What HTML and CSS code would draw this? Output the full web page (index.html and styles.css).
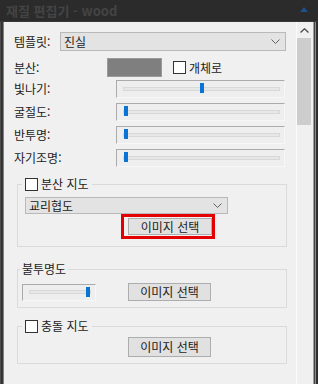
FILE: index.html
```html
<!DOCTYPE html>
<html lang="ko">
<head>
<meta charset="utf-8">
<title>재질 편집기 - wood</title>
<link rel="stylesheet" href="styles.css">
</head>
<body>
<div class="window">
  <div class="titlebar">
    <span class="title">재질 편집기 - wood</span>
    <svg class="tb-arrow" width="8" height="5" viewBox="0 0 8 5"><polygon points="0,5 4,0 8,5" fill="#1f4f8c"/></svg>
  </div>
  <div class="frame">
    <div class="edge-left"></div>
    <div class="content">
      <div class="row row-template">
        <span class="label lbl-template">템플릿:</span>
        <div class="combo combo-template">
          <span class="combo-text">진실</span>
          <svg class="chev" width="9" height="5" viewBox="0 0 9 5"><polyline points="0.5,0.5 4.5,4.5 8.5,0.5" fill="none" stroke="#606060" stroke-width="1"/></svg>
        </div>
      </div>
      <div class="row row-diffuse">
        <span class="label lbl-diffuse">분산:</span>
        <div class="swatch"></div>
        <label class="check check-inline"><span class="box"></span>개체로</label>
      </div>
      <div class="row row-slider">
        <span class="label lbl-slider">빛나기:</span>
        <div class="slider slider-wide"><div class="track"></div><div class="thumb" style="left: 83px"></div></div>
      </div>
      <div class="row row-slider">
        <span class="label lbl-slider">굴절도:</span>
        <div class="slider slider-wide"><div class="track"></div><div class="thumb" style="left: 7px"></div></div>
      </div>
      <div class="row row-slider">
        <span class="label lbl-slider">반투명:</span>
        <div class="slider slider-wide"><div class="track"></div><div class="thumb" style="left: 7px"></div></div>
      </div>
      <div class="row row-slider">
        <span class="label lbl-slider">자기조명:</span>
        <div class="slider slider-wide"><div class="track"></div><div class="thumb" style="left: 7px"></div></div>
      </div>

      <fieldset class="group group-diffuse">
        <legend class="legend-check"><span class="box"></span>분산 지도</legend>
        <div class="combo combo-map">
          <span class="combo-text">교리협도</span>
          <svg class="chev" width="9" height="5" viewBox="0 0 9 5"><polyline points="0.5,0.5 4.5,4.5 8.5,0.5" fill="none" stroke="#606060" stroke-width="1"/></svg>
        </div>
        <div class="highlight"><button class="btn">이미지 선택</button></div>
      </fieldset>

      <fieldset class="group group-opacity">
        <legend class="legend-text">불투명도</legend>
        <div class="group-row">
          <div class="slider slider-small"><div class="track"></div><div class="thumb" style="left: 63px"></div></div>
          <button class="btn btn-opacity">이미지 선택</button>
        </div>
      </fieldset>

      <fieldset class="group group-bump">
        <legend class="legend-check"><span class="box"></span>충돌 지도</legend>
        <button class="btn btn-bump">이미지 선택</button>
      </fieldset>
    </div>
    <div class="scrollbar">
      <div class="sb-up">
        <svg width="9" height="5" viewBox="0 0 9 5"><polyline points="0.5,4.5 4.5,0.8 8.5,4.5" fill="none" stroke="#505050" stroke-width="1.4"/></svg>
      </div>
      <div class="sb-thumb"></div>
    </div>
    <div class="edge-right"></div>
  </div>
</div>
</body>
</html>
```

FILE: styles.css
```css
* { box-sizing: border-box; }
html, body {
  margin: 0;
  padding: 0;
  width: 318px;
  height: 384px;
  overflow: hidden;
  background: #f0f0f0;
  font-family: "Noto Sans CJK KR", "Noto Sans", sans-serif;
  font-size: 12px;
  color: #1b1b1b;
}
.window {
  display: flex;
  flex-direction: column;
  width: 318px;
  height: 384px;
}
.titlebar {
  height: 22px;
  flex: none;
  background: #2b2b2b;
  display: flex;
  align-items: center;
  justify-content: space-between;
  padding: 0 10px 0 6px;
  border-bottom: 1px solid #383838;
}
.title {
  color: #444444;
  font-size: 13px;
  line-height: 16px;
  font-weight: bold;
}
.tb-arrow { display: block; margin-bottom: 2px; }
.frame {
  flex: 1;
  display: flex;
  min-height: 0;
}
.edge-left {
  width: 4px;
  flex: none;
  background: linear-gradient(to right, #5c5c5c, #2e2e2e 40%, #3c3c3c 70%, #b5b5b5);
}
.edge-right {
  width: 5px;
  flex: none;
  background: linear-gradient(to right, #a0a0a0 0, #a0a0a0 20%, #444 20%, #444 40%, #8a8a8a 40%, #8a8a8a 60%, #2e2e2e 60%, #2e2e2e 100%);
}
.content {
  width: 292px;
  flex: none;
  padding: 10px 0 0 10px;
  display: flex;
  flex-direction: column;
}
.row {
  display: flex;
  align-items: center;
  flex: none;
}
.label { flex: none; white-space: nowrap; line-height: 16px; }
.row-template { height: 19px; }
.lbl-template { width: 46px; }
.combo {
  display: flex;
  align-items: center;
  justify-content: space-between;
  background: #e3e3e3;
  border: 1px solid #b9b9b9;
  line-height: 14px;
}
.combo-template { width: 226px; height: 19px; padding: 0 5px 0 3px; }
.combo-text { white-space: nowrap; }
.chev { display: block; }

.row-diffuse { height: 19px; margin-top: 7px; }
.lbl-diffuse { width: 93px; }
.swatch {
  width: 55px;
  height: 19px;
  background: #7f7f7f;
  border: 1px solid #9a9a9a;
}
.check {
  display: flex;
  align-items: center;
  white-space: nowrap;
  line-height: 14px;
}
.check-inline { margin-left: 11px; }
.box {
  display: inline-block;
  width: 13px;
  height: 13px;
  background: #fff;
  border: 1px solid #333;
  margin-right: 3px;
  flex: none;
}

.row-slider { height: 18px; margin-top: 5px; }
.row-diffuse + .row-slider { margin-top: 3px; }
.lbl-slider { width: 102px; }
.slider {
  position: relative;
  height: 18px;
  background: #eeeeee;
  border-top: 1px solid #ababab;
  border-left: 1px solid #ababab;
  border-right: 1px solid #f7f7f7;
  border-bottom: 1px solid #f7f7f7;
  display: flex;
  align-items: center;
  padding: 0 4px 0 6px;
  flex: none;
}
.slider-wide { width: 169px; }
.slider-small { width: 74px; height: 17px; }
.track {
  flex: 1;
  height: 4px;
  background: #e6e7e7;
  border: 1px solid #d8d8d8;
}
.thumb {
  position: absolute;
  top: 2px;
  width: 4px;
  height: 10px;
  background: #0a74d6;
}

.group {
  margin: 0 9px 0 3px;
  border: 1px solid #dadada;
  flex: none;
  min-width: 0;
}
.legend-check {
  display: flex;
  align-items: center;
  padding: 0 3px;
  margin-left: -3px;
  line-height: 14px;
  height: 14px;
}
.legend-text {
  padding: 0 2px;
  margin-left: -2px;
  line-height: 16px;
}
.group-diffuse {
  margin-top: 10px;
  padding: 6px 0 7px 7px;
}
.combo-map { width: 203px; height: 17px; padding: 0 5px 0 3px; }
.highlight {
  width: 94px;
  margin-left: 96px;
  border: 3px solid #e40000;
  padding: 1px 0 1px 4px;
}
.btn {
  display: block;
  font-family: inherit;
  font-size: 12px;
  color: #1b1b1b;
  background: #e1e1e1;
  border: 1px solid #adadad;
  width: 84px;
  height: 17px;
  padding: 0;
  line-height: 14px;
  text-align: center;
}
.group-opacity {
  margin-top: 14px;
  padding: 6px 0 6px 4px;
}
.group-row {
  display: flex;
  align-items: center;
}
.btn-opacity { height: 18px; width: 83px; margin-left: 32px; }
.group-bump {
  margin-top: 11px;
  padding: 4px 0 6px 7px;
}
.btn-bump { height: 20px; width: 83px; margin-left: 103px; }

.scrollbar {
  width: 17px;
  flex: none;
  border-left: 1px solid #fbfbfb;
  background: #f0f0f0;
  display: flex;
  flex-direction: column;
}
.sb-up {
  height: 16px;
  display: flex;
  align-items: center;
  justify-content: center;
  padding-right: 1px;
}
.sb-up svg { display: block; }
.sb-thumb {
  width: 14px;
  height: 87px;
  background: #cdcdcd;
}
```
